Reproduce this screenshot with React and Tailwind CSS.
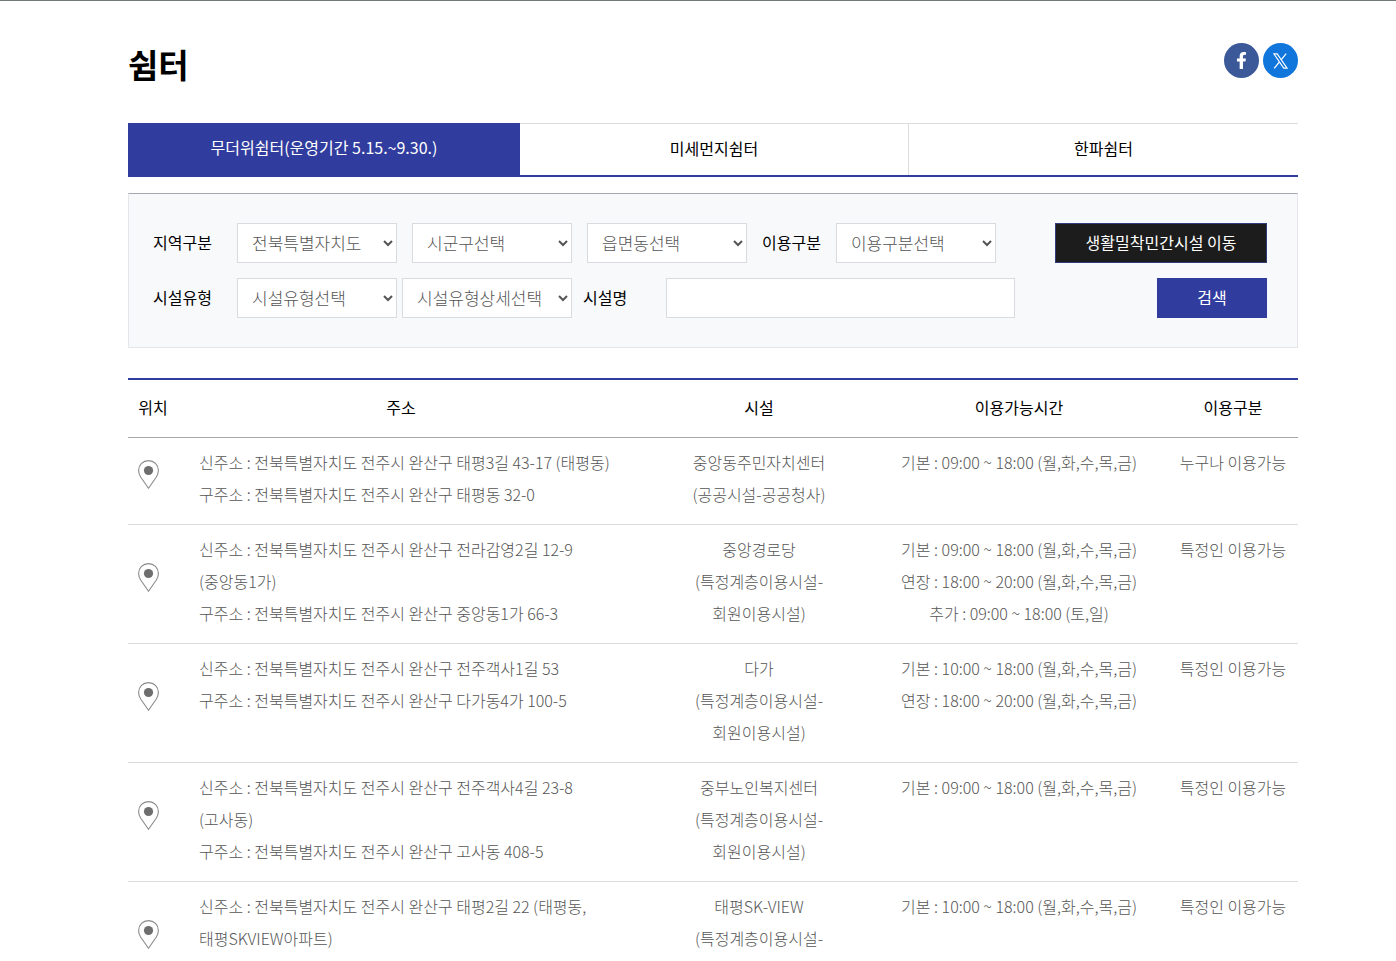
import React, { useState } from 'react';
import { FaFacebookF } from 'react-icons/fa';

const tabs = ['무더위쉼터(운영기간 5.15.~9.30.)', '미세먼지쉼터', '한파쉼터'];

const shelters = [
  {
    address: ['신주소 : 전북특별자치도 전주시 완산구 태평3길 43-17 (태평동)', '구주소 : 전북특별자치도 전주시 완산구 태평동 32-0'],
    facility: ['중앙동주민자치센터', '(공공시설-공공청사)'],
    hours: ['기본 : 09:00 ~ 18:00 (월,화,수,목,금)'],
    target: '누구나 이용가능',
  },
  {
    address: ['신주소 : 전북특별자치도 전주시 완산구 전라감영2길 12-9', '(중앙동1가)', '구주소 : 전북특별자치도 전주시 완산구 중앙동1가 66-3'],
    facility: ['중앙경로당', '(특정계층이용시설-', '회원이용시설)'],
    hours: ['기본 : 09:00 ~ 18:00 (월,화,수,목,금)', '연장 : 18:00 ~ 20:00 (월,화,수,목,금)', '추가 : 09:00 ~ 18:00 (토,일)'],
    target: '특정인 이용가능',
  },
  {
    address: ['신주소 : 전북특별자치도 전주시 완산구 전주객사1길 53', '구주소 : 전북특별자치도 전주시 완산구 다가동4가 100-5'],
    facility: ['다가', '(특정계층이용시설-', '회원이용시설)'],
    hours: ['기본 : 10:00 ~ 18:00 (월,화,수,목,금)', '연장 : 18:00 ~ 20:00 (월,화,수,목,금)'],
    target: '특정인 이용가능',
  },
  {
    address: ['신주소 : 전북특별자치도 전주시 완산구 전주객사4길 23-8', '(고사동)', '구주소 : 전북특별자치도 전주시 완산구 고사동 408-5'],
    facility: ['중부노인복지센터', '(특정계층이용시설-', '회원이용시설)'],
    hours: ['기본 : 09:00 ~ 18:00 (월,화,수,목,금)'],
    target: '특정인 이용가능',
  },
  {
    address: ['신주소 : 전북특별자치도 전주시 완산구 태평2길 22 (태평동,', '태평SKVIEW아파트)'],
    facility: ['태평SK-VIEW', '(특정계층이용시설-'],
    hours: ['기본 : 10:00 ~ 18:00 (월,화,수,목,금)'],
    target: '특정인 이용가능',
  },
];

const PinIcon = () => (
  <svg width="21" height="29" viewBox="0 0 21 29" fill="none" className="block">
    <path
      d="M10.5 0.6C5 0.6 0.6 5 0.6 10.4C0.6 13 1.6 15.2 2.8 17.2L10.5 28.2L18.2 17.2C19.4 15.2 20.4 13 20.4 10.4C20.4 5 16 0.6 10.5 0.6Z"
      stroke="#8a8a8a"
      strokeWidth="1.1"
    />
    <circle cx="10.5" cy="10.5" r="4.6" fill="#6e6e6e" />
  </svg>
);

const XIcon = () => (
  <svg width="15" height="16" viewBox="0 0 15 16" fill="none" stroke="#fff">
    <path d="M0.9 0.9H4.2L14 15.1H10.7Z" strokeWidth="1.1" />
    <path d="M13.2 0.7L8.3 6.6M6.4 9L1.2 15.3" strokeWidth="1.2" />
  </svg>
);

const Select = ({ id, label, className }) => (
  <select
    id={id}
    aria-label={label}
    className={`h-10 shrink-0 border border-[#d9dbde] bg-white pb-0.5 pl-2.5 text-[17px] font-light text-[#555] ${className}`}
  >
    <option>{label}</option>
  </select>
);

const Lines = ({ items }) => items.map((line) => (
  <span key={line} className="block whitespace-nowrap">{line}</span>
));

const App = () => {
  const [activeTab, setActiveTab] = useState(0);

  return (
    <div className="border-t border-[#6f7b79] bg-white pr-[98px] pl-32 font-['Noto_Sans_CJK_KR',sans-serif] text-base text-black">
      <header className="flex items-start justify-between pt-[42px]">
        <h1 className="h-20 text-[33px] leading-[42px] font-bold">쉼터</h1>
        <div className="flex gap-1">
          <a href="#facebook" aria-label="페이스북" className="flex size-[35px] items-center justify-center rounded-full bg-[#3b5998] text-white">
            <FaFacebookF size={17} />
          </a>
          <a href="#x" aria-label="X" className="flex size-[35px] items-center justify-center rounded-full bg-[#1176dc]">
            <XIcon />
          </a>
        </div>
      </header>

      <nav className="grid h-[54px] grid-cols-[392fr_389fr_389fr] border-b-2 border-[#303c9e]">
        {tabs.map((tab, index) => (
          <button
            key={tab}
            type="button"
            onClick={() => setActiveTab(index)}
            className={`
              border-t
              ${activeTab === index ? 'border-[#303c9e] bg-[#303c9e] pb-1.5 text-white' : 'border-[#dcdcdc] pb-1'}
              ${index === 1 ? 'border-r' : ''}
            `}
          >
            {tab}
          </button>
        ))}
      </nav>

      <form
        onSubmit={(e) => e.preventDefault()}
        className="mt-4 flex flex-col gap-[15px] border border-[#e4e6ea] border-t-[#a3a8b2] bg-[#f8f9fb] pt-[29px] pr-[30px] pb-[29px] pl-6"
      >
        <div className="flex items-center gap-[15px]">
          <label htmlFor="sido" className="w-[69px] shrink-0 pb-0.5">지역구분</label>
          <Select id="sido" label="전북특별자치도" className="w-40" />
          <Select id="sigungu" label="시군구선택" className="w-40" />
          <Select id="dong" label="읍면동선택" className="w-40" />
          <label htmlFor="target" className="shrink-0 pb-0.5">이용구분</label>
          <Select id="target" label="이용구분선택" className="w-40" />
          <button type="button" className="ml-auto h-10 w-[212px] shrink-0 border border-[#303c7e] bg-[#1c1c1c] pb-0.5 text-white">
            생활밀착민간시설 이동
          </button>
        </div>
        <div className="flex items-center">
          <label htmlFor="type" className="w-[84px] shrink-0 pb-0.5">시설유형</label>
          <Select id="type" label="시설유형선택" className="mr-[5px] w-40" />
          <Select id="detail" label="시설유형상세선택" className="w-[170px]" />
          <label htmlFor="name" className="ml-[11px] w-[83px] shrink-0 pb-0.5">시설명</label>
          <input id="name" type="text" className="h-10 w-[349px] border border-[#d9dbde] bg-white px-3" />
          <button type="submit" className="ml-auto h-10 w-[110px] shrink-0 bg-[#303c9e] pb-0.5 text-white">
            검색
          </button>
        </div>
      </form>

      <table className="mt-[30px] w-full table-fixed border-t-2 border-[#303c9e]">
        <colgroup>
          <col className="w-[50px]" />
          <col />
          <col className="w-[270px]" />
          <col className="w-[250px]" />
          <col className="w-[154px]" />
        </colgroup>
        <thead>
          <tr className="h-[58px] border-b border-[#a5a8ab]">
            <th className="pb-0.5 font-normal">위치</th>
            <th className="pb-0.5 font-normal">주소</th>
            <th className="pb-0.5 font-normal">시설</th>
            <th className="pb-0.5 font-normal">이용가능시간</th>
            <th className="pb-0.5 pl-6 font-normal">이용구분</th>
          </tr>
        </thead>
        <tbody className="text-center leading-8 font-light text-[#555]">
          {shelters.map((shelter) => (
            <tr
              key={shelter.facility[0]}
              className="border-b border-[#dcdcdc] align-top last:h-[119px]"
            >
              <td className="pb-3 pl-2.5 align-middle">
                <button type="button" aria-label="위치 보기" className="block">
                  <PinIcon />
                </button>
              </td>
              <td className="pt-2 pb-3.5 pl-[21px] text-left">
                <Lines items={shelter.address} />
              </td>
              <td className="pt-2 pb-3.5">
                <Lines items={shelter.facility} />
              </td>
              <td className="pt-2 pb-3.5">
                <Lines items={shelter.hours} />
              </td>
              <td className="pt-2 pb-3.5 pl-6">{shelter.target}</td>
            </tr>
          ))}
        </tbody>
      </table>
    </div>
  );
};

export default App;
